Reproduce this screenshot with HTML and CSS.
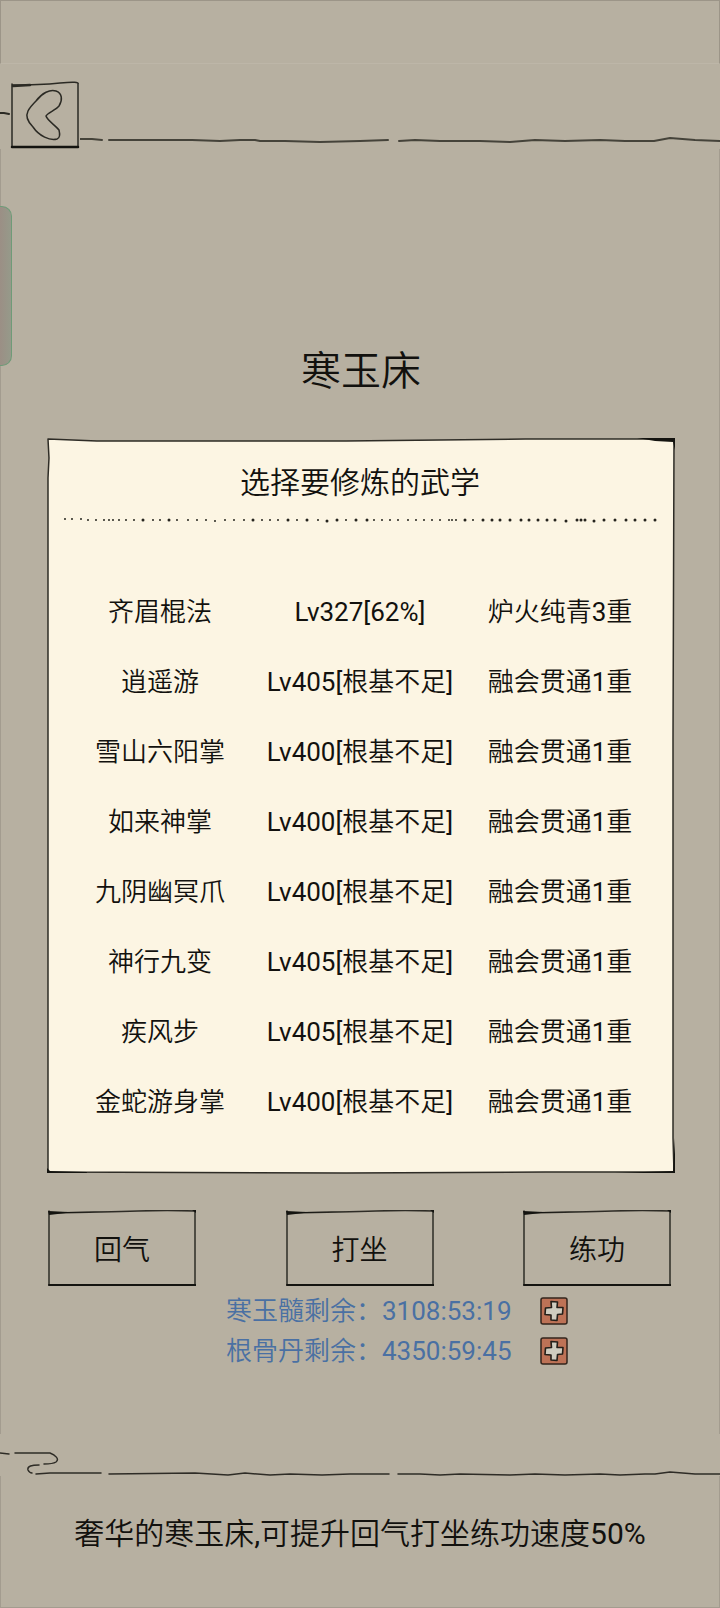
FILE: index.html
```html
<!DOCTYPE html>
<html lang="zh-CN">
<head>
    <meta charset="UTF-8">
    <meta name="viewport" content="width=device-width, initial-scale=1.0">
    <title>寒玉床</title>
    <link rel="stylesheet" href="styles.css">
</head>
<body>

    <!-- Shared ink drawings -->
    <svg class="defs" width="0" height="0" aria-hidden="true">
        <symbol id="frame" viewBox="0 0 148 76" preserveAspectRatio="none">
            <path class="ink" d="M1 1 L1 75 M1 3 Q60 2 90 1 T147 1 L147 75"/>
            <path class="ink thick" d="M1 75 H148"/>
            <path class="blot" d="M0 1 L20 2 L60 1.500 L18 3 L1 5 Z"/>
            <path class="blot" d="M144 0 L148 0 L148 3 Z"/>
        </symbol>
        <symbol id="plus" viewBox="0 0 28 28">
            <rect x="1" y="1" width="26" height="26" rx="2" fill="#bd7256" stroke="#33251d" stroke-width="1.5"/>
            <path d="M11 4.500 L17.500 5 L17 10.500 L23 10.500 L22.500 17 L17.500 17.500 L17 23.500 L11 23 L11 18 L5 17.500 L5.500 11 L11.500 10.500 Z" fill="#cfccbf" stroke="#241f19" stroke-width="1.600" stroke-linejoin="round"/>
        </symbol>
    </svg>

    <div class="status-bar"></div>

    <header class="top">
        <button class="back" type="button" aria-label="返回">
            <svg width="80" height="68" viewBox="0 0 80 68" fill="none" stroke="#2b2a24" stroke-linecap="round">
                <path d="M0 32 L4 32 L9 33" stroke-width="2"/>
                <path d="M12 3 L12 66 M12 4 Q40 4 60 2 T78 3 L78 66" stroke-width="1.500"/>
                <path d="M13 5 L30 4" stroke-width="2.500"/>
                <path d="M12 66 H78" stroke-width="2.500" stroke="#141410"/>
                <path d="M36 20 C42 12 50 8 56 10 C62 12 63 19 59 25 C56 29 47 32 46 35 C47 39 56 45 59 49 C60 53 60 57 57 58 C50 60 39 55 33 46 C27 40 26 34 28 30 C30 26 33 23 36 20 Z" stroke-width="1.500"/>
            </svg>
        </button>
        <svg class="top-line" viewBox="0 0 640 12" preserveAspectRatio="none" aria-hidden="true">
            <path class="ink line" d="M0 5 L12 5 L22 6"/>
            <path class="ink line" d="M29 6 L112 6 L140 7 L160 6 L175 6 L180 7 L205 7 L240 8 L280 7 L308 6 M319 7 L335 6 L360 7 L400 7 L430 8 L455 6 L485 7 L520 6 L545 7 L574 7 L590 4 L615 6 L640 7"/>
        </svg>
    </header>

    <div class="side-handle"></div>

    <main>
        <h1>寒玉床</h1>

        <section class="panel">
            <svg class="frame" viewBox="0 0 630 736" preserveAspectRatio="none" aria-hidden="true">
                <path class="ink paper" d="M1 1 L50 3 L300 3 L480 1 L629 1 L628 300 L628 700 L629 734 L500 734 L300 735 L1 734 L1 40 L2 20 Z"/>
                <path class="blot" d="M592 0 L630 0 L630 12 L628 4 L610 3 Z"/>
                <path class="blot" d="M0 730 L3 733 L40 734 L40 735 L0 735 Z"/>
                <path class="blot" d="M630 700 L630 735 L570 735 L628 733 Z"/>
            </svg>
            <div class="panel-body">
                <h2>选择要修炼的武学</h2>
                <svg class="dots" viewBox="0 0 600 8" aria-hidden="true">
                    <path stroke-width="2" d="M5 3h0M12 3h0M21 3h0M28 4h0M36 4h0M44 4h0M49 4h0M53 4h0M59 4h0M66 4h0M74 4h0M93 4h0M100 4h0M117 4h0M128 4h0M137 4h0M146 4h0M155 5h0M165 4h0M174 4h0M184 4h0M202 4h0M210 4h0M218 4h0M237 4h0M258 4h0M286 4h0M314 4h0M322 4h0M330 4h0M338 4h0M348 4h0M356 4h0M364 4h0M372 4h0M380 4h0M389 4h0M392 4h0M396 4h0M413 4h0"/>
                    <path stroke-width="3" d="M83 4h0M109 4h0M193 4h0M228 4h0M247 4h0M267 5h0M277 4h0M296 4h0M307 4h0M405 4h0M423 4h0M432 4h0M440 4h0M450 4h0M461 4h0M469 4h0M478 4h0M487 4h0M495 4h0M506 5h0M517 4h0M521 4h0M525 4h0M534 5h0M544 4h0M555 4h0M566 4h0M575 4h0M585 4h0M595 4h0"/>
                </svg>
                <table>
                    <tbody>
                        <tr><td>齐眉棍法</td><td>Lv327[62%]</td><td>炉火纯青3重</td></tr>
                        <tr><td>逍遥游</td><td>Lv405[根基不足]</td><td>融会贯通1重</td></tr>
                        <tr><td>雪山六阳掌</td><td>Lv400[根基不足]</td><td>融会贯通1重</td></tr>
                        <tr><td>如来神掌</td><td>Lv400[根基不足]</td><td>融会贯通1重</td></tr>
                        <tr><td>九阴幽冥爪</td><td>Lv400[根基不足]</td><td>融会贯通1重</td></tr>
                        <tr><td>神行九变</td><td>Lv405[根基不足]</td><td>融会贯通1重</td></tr>
                        <tr><td>疾风步</td><td>Lv405[根基不足]</td><td>融会贯通1重</td></tr>
                        <tr><td>金蛇游身掌</td><td>Lv400[根基不足]</td><td>融会贯通1重</td></tr>
                    </tbody>
                </table>
            </div>
        </section>

        <div class="actions">
            <button type="button"><svg class="frame" aria-hidden="true"><use href="#frame"/></svg><span>回气</span></button>
            <button type="button"><svg class="frame" aria-hidden="true"><use href="#frame"/></svg><span>打坐</span></button>
            <button type="button"><svg class="frame" aria-hidden="true"><use href="#frame"/></svg><span>练功</span></button>
        </div>

        <div class="remaining">
            <p>寒玉髓剩余：3108:53:19</p>
            <button type="button" aria-label="增加寒玉髓"><svg width="28" height="28"><use href="#plus"/></svg></button>
            <p>根骨丹剩余：4350:59:45</p>
            <button type="button" aria-label="增加根骨丹"><svg width="28" height="28"><use href="#plus"/></svg></button>
        </div>
    </main>

    <footer>
        <svg class="bottom-line" viewBox="0 0 720 42" preserveAspectRatio="none" aria-hidden="true">
            <path class="ink" d="M0 19 L9 20 M15 19 L50 19 C55 21 60 25 56 28 C53 30 48 30 44 30 M39 31 C32 31 27 32 28 36 C29 38 30 39 32 39 M36 40 L50 39 L101 39"/>
            <path class="ink" d="M109 40 L195 39 L228 41 L245 39 L270 41 L290 40 L322 41 L350 40 L389 40 M398 40 L420 40 L440 41 L460 40 L510 41 L535 40 L565 41 L600 40 L620 41 L645 40 L655 40 L670 38 L695 40 L720 40"/>
        </svg>
        <p>奢华的寒玉床,可提升回气打坐练功速度50%</p>
    </footer>

</body>
</html>
```
FILE: styles.css
```css
* {
    box-sizing: border-box;
}

body {
    margin: 0;
    min-height: 100vh;
    display: flex;
    flex-direction: column;
    position: relative;
    background-color: #b7b0a1;
    color: #12110e;
    font-family: Roboto, "Noto Sans CJK SC DemiLight", "Noto Sans CJK SC", sans-serif;
    font-size: 26px;
    overflow-x: hidden;
}

h1, h2, p {
    margin: 0;
    font-weight: inherit;
}

button {
    padding: 0;
    border: none;
    background: none;
    color: inherit;
    font: inherit;
    cursor: pointer;
}

svg {
    display: block;
}

.defs {
    position: absolute;
}

/* Ink strokes */
.ink {
    fill: none;
    stroke: #2e2c26;
    stroke-width: 1.5px;
    stroke-linecap: round;
    stroke-linejoin: round;
    vector-effect: non-scaling-stroke;
}
.thick {
    stroke: #141410;
    stroke-width: 2px;
}
.paper {
    fill: #fcf5e3;
}
.blot {
    fill: #141410;
}

/* Header */
.status-bar {
    height: 64px;
    border: 1px solid #9c9588;
    border-bottom-color: #bdb6a8;
}
.top {
    display: flex;
    align-items: flex-end;
    padding-top: 17px;
}
.top-line {
    flex: 1;
    min-width: 0;
    height: 12px;
    margin-bottom: 3px;
}
.top-line .line {
    stroke: #45433a;
    stroke-width: 2px;
}
.side-handle {
    position: absolute;
    left: 0;
    top: 206px;
    width: 12px;
    height: 160px;
    border: 1px solid #6f9b78;
    border-left: none;
    border-radius: 0 10px 10px 0;
    background: linear-gradient(to right, #9b8f85, #969a8a);
}

/* Main */
main {
    flex: 1;
    padding: 193px 44px 20px 46px;
    border: solid #a39c8f;
    border-width: 0 1px;
}
h1 {
    font-size: 40px;
    line-height: 60px;
    text-align: center;
}

/* The frame and the content share one grid cell */
.panel, .actions button {
    display: grid;
}
.panel > *, .actions button > * {
    grid-area: 1 / 1;
}
.frame {
    width: 100%;
    height: 100%;
    min-height: 0;
    overflow: visible;
}

.panel {
    margin-top: 36px;
}
.panel > .frame {
    height: 0;
    min-height: 100%;
}
.panel-body {
    padding: 15px 15px 37px 13px;
}
h2 {
    font-size: 30px;
    line-height: 60px;
    text-align: center;
}
.dots {
    width: 100%;
    margin: 3px 0 53px;
    stroke: #26241e;
    stroke-linecap: round;
}
table {
    width: 100%;
    table-layout: fixed;
    border-collapse: collapse;
}
td {
    padding: 0;
    line-height: 70px;
    text-align: center;
    white-space: nowrap;
}

/* Buttons */
.actions {
    display: flex;
    justify-content: space-between;
    margin-top: 36px;
    padding: 0 4px 0 1px;
}
.actions button {
    width: 148px;
    height: 76px;
    align-items: center;
    font-size: 28px;
}

/* Remaining time */
.remaining {
    display: grid;
    grid-template-columns: auto auto;
    justify-content: start;
    align-items: center;
    column-gap: 28px;
    margin-top: 5px;
    padding-left: 179px;
    color: #4a70a3;
}
.remaining p {
    line-height: 40px;
}

/* Footer */
.bottom-line {
    width: 100%;
    height: 42px;
}
footer p {
    height: 132px;
    padding-top: 28px;
    border: 1px solid #a39c8f;
    border-top: none;
    font-size: 30px;
    line-height: 60px;
    text-align: center;
}
```
